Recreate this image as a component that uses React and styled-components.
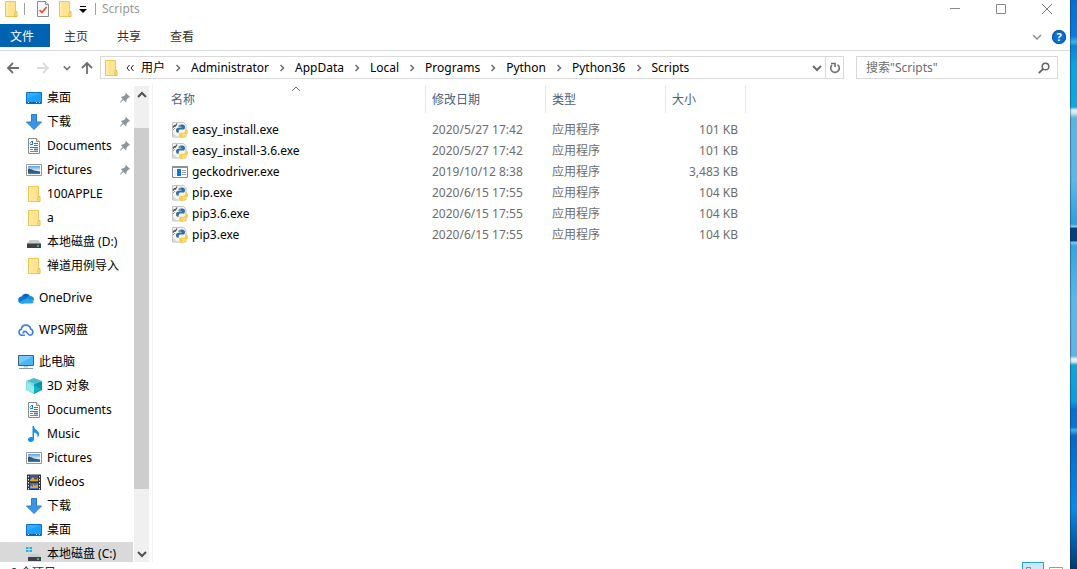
import React from 'react';
import styled, { createGlobalStyle } from 'styled-components';

const GlobalStyle = createGlobalStyle`
  * {
    box-sizing: border-box;
  }

  body {
    margin: 0;
    overflow: hidden;
    background: #fff;
    color: #000;
    font-family: 'Noto Sans', 'Noto Sans CJK SC', sans-serif;
    font-size: 12px;
    line-height: 20px;
  }

  button, input {
    margin: 0;
    padding: 0;
    border: 0;
    background: none;
    color: inherit;
    font: inherit;
  }

  svg {
    display: block;
    flex-shrink: 0;
  }
`;

const Screen = styled.div`
  display: flex;
  height: 100vh;
  overflow: hidden;
`;

const Desktop = styled.div`
  width: 7px;
  flex-shrink: 0;
  box-shadow: inset 1px 0 1px rgba(0, 40, 90, 0.4);
  background: linear-gradient(
    #0870cf 0, #0b7ad8 36px, #3cb4e4 42px, #0a84d8 46px, #0ca4dc 66px,
    #12a8dc 107px, #e4f3f8 110px, #cfeaf6 113px, #5cb4e0 118px,
    #5cb8e6 180px, #2f9edc 224px, #8fd4f0 227px, #04407c 228px,
    #04407c 241px, #7cd0f2 242px, #36a4de 246px, #5cb8e8 300px,
    #62b4e2 356px, #eef4f2 359px, #d6e8ec 362px, #0fa6d8 365px,
    #0c9cdc 402px, #0a6ecc 410px, #0a74d0 427px, #3cb0e8 430px,
    #0668c4 436px, #0a8ae6 508px, #0560ac 540px, #033a6c 569px
  );
`;

const Window = styled.div`
  display: flex;
  flex-direction: column;
  flex: 1;
  min-width: 0;
`;

const TitleBar = styled.header`
  display: flex;
  justify-content: space-between;
  height: 24px;
  flex-shrink: 0;
`;

const QuickAccess = styled.div`
  display: flex;
  height: 17px;
  align-items: center;
  padding-left: 3px;
`;

const QuickButton = styled.button`
  display: flex;
  width: ${(p) => p.$width || 16}px;
  height: 16px;
  align-items: center;
  justify-content: center;
`;

const Divider = styled.span`
  width: 1px;
  height: 12px;
  margin: 0 ${(p) => p.$gap}px;
  background: #a0a0a0;
`;

const WindowTitle = styled.span`
  padding-left: 3px;
  color: #999;
`;

const CaptionButtons = styled.div`
  display: flex;
`;

const CaptionButton = styled.button`
  display: flex;
  width: 46px;
  height: 17px;
  align-items: center;
  justify-content: center;
`;

const Ribbon = styled.nav`
  display: flex;
  height: 27px;
  flex-shrink: 0;
  align-items: flex-start;
  border-bottom: 1px solid #d9dadb;
`;

const RibbonTab = styled.button`
  width: 53px;
  height: 23px;
  padding: 2px 0 0 14px;
  color: #333;
  text-align: left;
`;

const FileTab = styled(RibbonTab)`
  width: 50px;
  padding-left: 10px;
  background: #0063b1;
  color: #fff;
`;

const RibbonTools = styled.div`
  display: flex;
  align-items: center;
  gap: 10px;
  margin-left: auto;
  padding: 6px 4px 0 0;
`;

const ToolButton = styled.button`
  display: flex;
  align-items: center;
  justify-content: center;
`;

const HelpButton = styled(ToolButton)`
  width: 14px;
  height: 14px;
  border-radius: 50%;
  background: #0b6fd0;
  box-shadow: inset 0 0 0 1px #0856a6;
  color: #fff;
  font-size: 11px;
  font-weight: 700;
  line-height: 14px;
`;

const AddressRow = styled.div`
  display: flex;
  height: 33px;
  flex-shrink: 0;
  padding: 5px 12px 5px 0;
`;

const History = styled.div`
  display: flex;
  width: 100px;
  align-items: center;
  gap: 8px;
  padding-left: 5px;
`;

const HistoryButton = styled(ToolButton)`
  width: ${(p) => p.$width}px;
  height: 23px;
`;

const AddressBox = styled.div`
  display: flex;
  flex: 1;
  min-width: 0;
  height: 23px;
  border: 1px solid #d9d9d9;
`;

const Crumbs = styled.div`
  display: flex;
  flex: 1;
  min-width: 0;
  align-items: center;
  overflow: hidden;
  padding-left: 2px;
  white-space: nowrap;
`;

const CrumbArrow = styled.span`
  display: flex;
  width: 26px;
  justify-content: center;
`;

const Overflow = styled.button`
  width: 22px;
  height: 20px;
  display: flex;
  align-items: center;
  justify-content: center;
`;

const DropButton = styled(ToolButton)`
  width: 17px;
  border-right: ${(p) => (p.$divided ? '1px solid #d9d9d9' : '0')};
`;

const SearchBox = styled.label`
  display: flex;
  width: 202px;
  height: 23px;
  align-items: center;
  margin-left: 12px;
  padding: 0 7px 0 9px;
  border: 1px solid #d9d9d9;
`;

const SearchInput = styled.input`
  flex: 1;
  min-width: 0;
  height: 20px;
  outline: 0;

  &::placeholder {
    color: #6d6d6d;
    opacity: 1;
  }
`;

const Body = styled.div`
  display: flex;
  flex: 1;
  min-height: 0;
`;

const Sidebar = styled.nav`
  width: 134px;
  flex-shrink: 0;
  overflow: hidden;
  padding-top: 2px;
`;

const TreeGroup = styled.div`
  margin-bottom: 8px;
`;

const TreeItem = styled.a`
  display: flex;
  height: 24px;
  align-items: center;
  gap: 5px;
  margin-right: 1px;
  padding: 0 3px 0 ${(p) => (p.$root ? 18 : 26)}px;
  background: ${(p) => (p.$selected ? '#d9d9d9' : 'transparent')};
  color: #000;
  text-decoration: none;
  white-space: nowrap;
`;

const PinSlot = styled.span`
  margin-left: auto;
`;

const ScrollBar = styled.div`
  display: flex;
  flex-direction: column;
  width: 16px;
  flex-shrink: 0;
  margin-top: 2px;
  border-right: 1px solid #fff;
  background: #f0f0f0;
`;

const ScrollButton = styled(ToolButton)`
  height: 17px;
`;

const ScrollTrack = styled.div`
  display: grid;
  flex: 1;
  grid-template-rows: 25fr 361fr 56fr;
`;

const ScrollThumb = styled.div`
  grid-row: 2;
  background: #cdcdcd;
`;

const Files = styled.main`
  flex: 1;
  min-width: 0;
  margin-left: 2px;
  padding: 2px 0 0 12px;
  border-left: 1px solid #f3f3f3;
`;

const FileTable = styled.table`
  width: 581px;
  border-collapse: separate;
  border-spacing: 0;
  table-layout: fixed;
`;

const HeadCell = styled.th`
  position: relative;
  width: ${(p) => p.$width}px;
  height: 27px;
  padding: 0 6px;
  border-right: 1px solid #e5e5e5;
  color: #4c607a;
  font-weight: 400;
  text-align: left;
`;

const SortMark = styled.span`
  position: absolute;
  top: -2px;
  left: 50%;
  margin-left: -4px;
`;

const Spacer = styled.tr`
  height: 6px;
`;

const Cell = styled.td`
  height: 21px;
  padding: 0 8px 0 6px;
  color: #6d6d6d;
  text-align: ${(p) => (p.$right ? 'right' : 'left')};
  white-space: nowrap;
`;

const FileName = styled.span`
  display: flex;
  align-items: center;
  gap: 4px;
  padding-left: 1px;
  color: #000;
`;

const StatusBar = styled.footer`
  display: flex;
  height: 7px;
  flex-shrink: 0;
  justify-content: space-between;
  overflow: hidden;
  padding-right: 7px;
  color: #1e395b;
`;

const StatusText = styled.span`
  padding: 1px 0 0 10px;
`;

const ViewButtons = styled.div`
  display: flex;
  gap: 5px;
`;

const ViewButton = styled.button`
  display: flex;
  width: ${(p) => (p.$active ? 22 : 14)}px;
  height: 20px;
  align-items: flex-start;
  padding: ${(p) => (p.$active ? '4px 3px' : '5px 0')};
  border: ${(p) => (p.$active ? '1px solid #26a0da' : '0')};
  background: ${(p) => (p.$active ? '#cbe8f6' : 'transparent')};
`;

const FolderIcon = () => (
  <svg width="16" height="16" viewBox="0 0 16 16">
    <path d="M2.500.5h10v10h1v5h-11z" fill="#ffe493" stroke="#efc64f" />
    <path d="M3 1h2v14H3z" fill="#ffeaa8" />
    <path d="M12.500 10.500h1.500v5h-2v-4z" fill="#ffe9a0" stroke="#e6b93c" />
  </svg>
);

const CheckPageIcon = () => (
  <svg width="14" height="16" viewBox="0 0 14 16">
    <path d="M1.500.5h8l3 3v12h-11z" fill="#f7f9fb" stroke="#8a8a8a" />
    <path d="M9.500.5v3h3" fill="#fff" stroke="#8a8a8a" />
    <path d="M3.500 9l2.500 2.500 4.500-5.500" fill="none" stroke="#e8501e" strokeWidth="1.700" />
  </svg>
);

const MonitorIcon = () => (
  <svg width="16" height="16" viewBox="0 0 16 16">
    <path d="M.5 2.500h15v11H.5z" fill="#1aa0ff" stroke="#0b74c8" />
    <path d="M1 9l13-6H1z" fill="#35aeff" />
    <path d="M1 12h14v1.500H1z" fill="#0563ae" />
    <path d="M2 12.500h1m7 0h1m2 0h1" stroke="#d8efff" />
  </svg>
);

const DownloadIcon = () => (
  <svg width="16" height="16" viewBox="0 0 16 16">
    <path d="M5.500.5h5v7.500h5L8 15.500.500 8h5z" fill="#3a96e4" stroke="#2b7fc9" />
  </svg>
);

const DocumentIcon = () => (
  <svg width="16" height="16" viewBox="0 0 16 16">
    <path d="M2.500.5h8l3 3v12h-11z" fill="#fff" stroke="#8b8b8b" />
    <path d="M10.500.5v3h3" fill="#eee" stroke="#8b8b8b" />
    <path d="M4 6.500h3M6.500 3v3.500M4 5.500l2-2.500M8 5.500h4M8 7.500h4M4 9.500h8" fill="none" stroke="#1689d2" />
    <path d="M4 11.500h3m-3 2h8m-3-2h3" stroke="#7b8790" />
    <path d="M8 10.500h4v2H8z" fill="#548199" />
  </svg>
);

const PictureIcon = () => (
  <svg width="16" height="16" viewBox="0 0 16 16">
    <defs>
      <linearGradient id="sky" x2="0" y2="1">
        <stop offset="0" stopColor="#569fe9" />
        <stop offset=".6" stopColor="#e6f3fb" />
        <stop offset="1" stopColor="#4d8db9" />
      </linearGradient>
    </defs>
    <path d="M.5 2.500h15v11H.5z" fill="#fff" stroke="#999" />
    <path d="M2 4h12v8H2z" fill="url(#sky)" />
    <path d="M2 7c3-1 4 1 6 1.500s4 .5 6 1V11H2z" fill="#315c62" />
    <path d="M2 10.500h12V12H2z" fill="#2d78b4" />
  </svg>
);

const DiskIcon = ({ windows }) => (
  <svg width="16" height="16" viewBox="0 0 16 16">
    <path d={windows ? 'M3.500 8h9L15 11H2z' : 'M3.500 6h9L15 10H1z'} fill="#c9cccf" />
    <path d={windows ? 'M2 11h13v4H2z' : 'M1 9.500h14V14H1z'} fill="#3c4145" />
    <path d={windows ? 'M11 13h2' : 'M11 12h2'} stroke="#42e35a" strokeWidth="1.500" />
    {windows && <path d="M0 1h2.500v2H0zm3.500 0H6v2H3.500zM0 4h2.500v2H0zm3.500 0H6v2H3.500z" fill="#16b3e8" />}
  </svg>
);

const OneDriveIcon = () => (
  <svg width="16" height="16" viewBox="0 0 16 16">
    <path d="M3.500 7.500A4.600 4.600 0 0 1 12 6L9 10z" fill="#0864b8" />
    <path d="M3.500 13.500A3.500 3.500 0 0 1 4 6.500c2-.5 3 .5 5 2l-3 5z" fill="#0a78d4" />
    <path d="M8 8.500A4 4 0 0 1 12 6a3.800 3.800 0 0 1 4 4.500L11 11z" fill="#158fdf" />
    <path d="M1.200 12L9 8.500l6.800 3a2.500 2.500 0 0 1-2.300 2H3.500a3 3 0 0 1-2.300-1.500z" fill="#27a5ea" />
  </svg>
);

const WpsCloudIcon = () => (
  <svg width="16" height="16" viewBox="0 0 16 16" fill="none" stroke="#3a7df0" strokeWidth="1.600">
    <path d="M7 13.200H3.800A3 3 0 0 1 3.300 7.300 4.700 4.700 0 0 1 12.600 7a3.200 3.200 0 0 1-.4 6.200c-2.800 0-2.800-3.800-5-3.800-1.500 0-2 1-2 2" />
  </svg>
);

const ComputerIcon = () => (
  <svg width="16" height="16" viewBox="0 0 16 16">
    <path d="M.5 1.500h15v10H.5z" fill="#49b6f6" stroke="#3c637b" />
    <path d="M1 2h14L1 10z" fill="#78cbfa" />
    <path d="M6 12h4v1.500H6z" fill="#b2c6d1" />
    <path d="M1 14.500h14" stroke="#8499a6" />
  </svg>
);

const CubeIcon = () => (
  <svg width="16" height="16" viewBox="0 0 16 16">
    <path d="M8 0l8 3-8 3-8-3z" fill="#48bfd0" />
    <path d="M0 3l8 3v10l-8-4z" fill="#78dae3" />
    <path d="M16 3L8 6v10l8-4z" fill="#0796ad" />
    <path d="M1 4l7 5v6l-7-3z" fill="#b4eff1" opacity=".6" />
    <path d="M8 7l7 4-7 4z" fill="#16b3c6" />
  </svg>
);

const MusicIcon = () => (
  <svg width="16" height="16" viewBox="0 0 16 16">
    <path d="M6.500 0h1.500c0 4 5 4 5 8 0 1.500-.5 2.500-1.500 3.500.5-3-1-4.500-3.500-5V13c0 2-1.500 3-3.500 3C2.800 16 2 15 2 13.800c0-2 2.300-3.200 4.500-2.500z" fill="#1491ea" />
  </svg>
);

const VideoIcon = () => (
  <svg width="16" height="16" viewBox="0 0 16 16">
    <path d="M1 .500h14V16H1z" fill="#343434" />
    <path d="M4 1h8v7H4z" fill="#3157a0" />
    <path d="M4 9h8v6H4z" fill="#3b70c8" />
    <path d="M4 6l3-3 2 3 3-2v3H4zm0 7l3-3 2 2 3-2v4H4z" fill="#d6a938" />
    <path d="M8 3h3v3M5 11h2v2" fill="#a64832" />
    <path d="M2.500 2v14M13.500 2v14" stroke="#eee" strokeDasharray="1.500 1.500" />
  </svg>
);

const PinIcon = () => (
  <svg width="10" height="10" viewBox="0 0 10 10">
    <path d="M6 0l4 4-1 .8-.7-.2L6.500 7v1.500l-1 .5L3.600 7 .5 9.700 0 9.300 2.700 6 1 4.200l.7-.8h1.500l2.500-2L5.300.700z" fill="#8796a1" />
  </svg>
);

const PythonIcon = () => (
  <svg width="16" height="16" viewBox="0 0 16 16">
    <path d="M.5.5h11l2.500 2.500v12H.5z" fill="#f4f4f4" stroke="#c4c4c4" />
    <path d="M1 5.500l1.500-2 1 .5 1.500-2.500" fill="none" stroke="#555" strokeWidth="1.300" />
    <path d="M1 8l2-2" stroke="#999" />
    <path d="M1 11l5 4.500H1z" fill="#d8d8d8" />
    <path d="M9.300 2.500c-2 0-2.800.8-2.800 2V5.500h3.300V6H5.700C4.500 6 4 7 4 8.300c0 1.500.6 2.500 1.700 2.500h1V9.300c0-1 .8-1.700 1.800-1.700h2.900c.8 0 1.500-.6 1.500-1.500V4.500c0-1.500-1.300-2-3.600-2z" fill="#336f9f" />
    <path d="M10.400 15.700c2.200 0 2.700-.8 2.700-2v-1h-3.300v-.5h4.500c1.200 0 1.700-1 1.700-2.300 0-1.500-.7-2.400-1.800-2.400H13.200V9c0 1-.7 1.700-1.700 1.700H8.700c-.9 0-1.600.6-1.600 1.500v1.600c0 1.300 1 1.900 3.300 1.900z" fill="#ffcf3b" />
    <path d="M7.500 4h1M11.300 14h1" stroke="#fff" />
  </svg>
);

const AppIcon = () => (
  <svg width="16" height="16" viewBox="0 0 16 16">
    <path d="M.5 2.500h15v11H.5z" fill="#fff" stroke="#7c858b" />
    <path d="M0 2h16v2H0z" fill="#8a9297" />
    <path d="M5 5h4v7H5z" fill="#0878d7" />
    <path d="M10 6.500h4m-4 2h4m-4 2h4" stroke="#9da3a7" />
    <path d="M2 5h2v7H2z" fill="#edf0f1" />
  </svg>
);

const chevrons = {
  down: 'M1 3l4 4 4-4',
  up: 'M1 7l4-4 4 4',
  right: 'M3.500 2l3 3-3 3',
};

const Chevron = ({ dir = 'down', size = 10, color = '#6d6d6d', weight = 1 }) => (
  <svg width={size} height={size} viewBox="0 0 10 10">
    <path d={chevrons[dir]} fill="none" stroke={color} strokeWidth={weight} />
  </svg>
);

const ArrowIcon = ({ d, color }) => (
  <svg width="14" height="14" viewBox="0 0 14 14">
    <path d={d} fill="none" stroke={color} strokeWidth="1.800" />
  </svg>
);

const RefreshIcon = () => (
  <svg width="12" height="12" viewBox="0 0 12 12" fill="none" stroke="#6d6d6d" strokeWidth="1.600">
    <path d="M8.500 2.600A4.300 4.300 0 1 1 3 3M2 1.500h4V5" />
  </svg>
);

const SearchIcon = () => (
  <svg width="12" height="12" viewBox="0 0 12 12" fill="none" stroke="#666">
    <circle cx="7.500" cy="4.500" r="3.300" strokeWidth="1.500" />
    <path d="M5 7L.8 11.200" strokeWidth="1.800" />
  </svg>
);

const path = ['用户', 'Administrator', 'AppData', 'Local', 'Programs', 'Python', 'Python36', 'Scripts'];

const tree = [
  [
    { name: '桌面', icon: MonitorIcon, pinned: true },
    { name: '下载', icon: DownloadIcon, pinned: true },
    { name: 'Documents', icon: DocumentIcon, pinned: true },
    { name: 'Pictures', icon: PictureIcon, pinned: true },
    { name: '100APPLE', icon: FolderIcon },
    { name: 'a', icon: FolderIcon },
    { name: '本地磁盘 (D:)', icon: DiskIcon },
    { name: '禅道用例导入', icon: FolderIcon },
  ],
  [{ name: 'OneDrive', icon: OneDriveIcon, root: true }],
  [{ name: 'WPS网盘', icon: WpsCloudIcon, root: true }],
  [
    { name: '此电脑', icon: ComputerIcon, root: true },
    { name: '3D 对象', icon: CubeIcon },
    { name: 'Documents', icon: DocumentIcon },
    { name: 'Music', icon: MusicIcon },
    { name: 'Pictures', icon: PictureIcon },
    { name: 'Videos', icon: VideoIcon },
    { name: '下载', icon: DownloadIcon },
    { name: '桌面', icon: MonitorIcon },
    { name: '本地磁盘 (C:)', icon: () => <DiskIcon windows />, selected: true },
  ],
];

const columns = [
  { label: '名称', width: 261, sorted: true },
  { label: '修改日期', width: 120 },
  { label: '类型', width: 120 },
  { label: '大小', width: 80 },
];

const files = [
  { name: 'easy_install.exe', date: '2020/5/27 17:42', size: '101 KB' },
  { name: 'easy_install-3.6.exe', date: '2020/5/27 17:42', size: '101 KB' },
  { name: 'geckodriver.exe', date: '2019/10/12 8:38', size: '3,483 KB', icon: AppIcon },
  { name: 'pip.exe', date: '2020/6/15 17:55', size: '104 KB' },
  { name: 'pip3.6.exe', date: '2020/6/15 17:55', size: '104 KB' },
  { name: 'pip3.exe', date: '2020/6/15 17:55', size: '104 KB' },
];

const Caption = () => (
  <TitleBar>
    <QuickAccess>
      <QuickButton aria-label="Scripts"><FolderIcon /></QuickButton>
      <Divider $gap={5} />
      <QuickButton $width={26} aria-label="属性"><CheckPageIcon /></QuickButton>
      <QuickButton $width={18} aria-label="新建文件夹"><FolderIcon /></QuickButton>
      <QuickButton $width={18} aria-label="自定义快速访问工具栏">
        <svg width="8" height="8" viewBox="0 0 8 8">
          <path d="M1 1.500h6" stroke="#000" />
          <path d="M0 4h8L4 8z" fill="#000" />
        </svg>
      </QuickButton>
      <Divider $gap={3} />
      <WindowTitle>Scripts</WindowTitle>
    </QuickAccess>
    <CaptionButtons>
      <CaptionButton aria-label="最小化">
        <svg width="10" height="10" viewBox="0 0 10 10"><path d="M0 4.500h10" stroke="#888" /></svg>
      </CaptionButton>
      <CaptionButton aria-label="最大化">
        <svg width="10" height="10" viewBox="0 0 10 10"><path d="M.5.5h9v9h-9z" fill="none" stroke="#888" /></svg>
      </CaptionButton>
      <CaptionButton aria-label="关闭">
        <svg width="10" height="10" viewBox="0 0 10 10"><path d="M0 0l10 10M10 0L0 10" stroke="#777" /></svg>
      </CaptionButton>
    </CaptionButtons>
  </TitleBar>
);

const AddressBar = () => (
  <AddressRow>
    <History>
      <HistoryButton $width={16} aria-label="后退">
        <ArrowIcon d="M13 7H2M7 2L2 7l5 5" color="#6d6d6d" />
      </HistoryButton>
      <HistoryButton $width={28} aria-label="前进">
        <ArrowIcon d="M1 7h11M7 2l5 5-5 5" color="#dcdcdc" />
      </HistoryButton>
      <HistoryButton $width={4} aria-label="最近浏览的位置">
        <Chevron size={8} color="#777" weight={2} />
      </HistoryButton>
      <HistoryButton $width={20} aria-label="上移">
        <ArrowIcon d="M7 13V2M2 7l5-5 5 5" color="#6d6d6d" />
      </HistoryButton>
    </History>
    <AddressBox>
      <Crumbs>
        <FolderIcon />
        <Overflow aria-label="更多">
          <svg width="8" height="8" viewBox="0 0 8 8">
            <path d="M3.500 1L1 4l2.500 3M7.500 1L5 4l2.500 3" fill="none" stroke="#222" />
          </svg>
        </Overflow>
        {path.map((part, index) => (
          <React.Fragment key={part}>
            {index > 0 && <CrumbArrow><Chevron dir="right" weight={1.5} /></CrumbArrow>}
            <button>{part}</button>
          </React.Fragment>
        ))}
      </Crumbs>
      <DropButton $divided aria-label="以前的位置"><Chevron weight={2} /></DropButton>
      <DropButton aria-label="刷新"><RefreshIcon /></DropButton>
    </AddressBox>
    <SearchBox>
      <SearchInput type="text" aria-label="搜索" placeholder={'搜索"Scripts"'} />
      <SearchIcon />
    </SearchBox>
  </AddressRow>
);

const NavigationTree = () => (
  <Sidebar>
    {tree.map((group, index) => (
      <TreeGroup key={index}>
        {group.map(({ name, icon: Icon, root, pinned, selected }) => (
          <TreeItem key={name} href="#" $root={root} $selected={selected}>
            <Icon />
            {name}
            {pinned && <PinSlot><PinIcon /></PinSlot>}
          </TreeItem>
        ))}
      </TreeGroup>
    ))}
  </Sidebar>
);

const FileList = () => (
  <Files>
    <FileTable>
      <thead>
        <tr>
          {columns.map(({ label, width, sorted }) => (
            <HeadCell key={label} $width={width}>
              {sorted && <SortMark><Chevron dir="up" /></SortMark>}
              {label}
            </HeadCell>
          ))}
        </tr>
      </thead>
      <tbody>
        <Spacer />
        {files.map(({ name, date, size, icon: Icon = PythonIcon }) => (
          <tr key={name}>
            <Cell><FileName><Icon />{name}</FileName></Cell>
            <Cell>{date}</Cell>
            <Cell>应用程序</Cell>
            <Cell $right>{size}</Cell>
          </tr>
        ))}
      </tbody>
    </FileTable>
  </Files>
);

const App = () => {
  return (
    <Screen>
      <GlobalStyle />
      <Window>
        <Caption />
        <Ribbon>
          <FileTab>文件</FileTab>
          <RibbonTab>主页</RibbonTab>
          <RibbonTab>共享</RibbonTab>
          <RibbonTab>查看</RibbonTab>
          <RibbonTools>
            <ToolButton aria-label="展开功能区"><Chevron color="#888" weight={1.3} /></ToolButton>
            <HelpButton aria-label="帮助">?</HelpButton>
          </RibbonTools>
        </Ribbon>
        <AddressBar />
        <Body>
          <NavigationTree />
          <ScrollBar>
            <ScrollButton aria-label="向上滚动"><Chevron dir="up" weight={2} color="#505050" /></ScrollButton>
            <ScrollTrack><ScrollThumb /></ScrollTrack>
            <ScrollButton aria-label="向下滚动"><Chevron weight={2} color="#505050" /></ScrollButton>
          </ScrollBar>
          <FileList />
        </Body>
        <StatusBar>
          <StatusText>6 个项目</StatusText>
          <ViewButtons>
            <ViewButton $active aria-label="详细信息">
              <svg width="14" height="12" viewBox="0 0 14 12"><path d="M.5 12V.5h4V12" fill="none" stroke="#888" /></svg>
            </ViewButton>
            <ViewButton aria-label="大图标">
              <svg width="14" height="12" viewBox="0 0 14 12"><path d="M.5.5h13v11H.5z" fill="none" stroke="#999" /></svg>
            </ViewButton>
          </ViewButtons>
        </StatusBar>
      </Window>
      <Desktop />
    </Screen>
  );
};

export default App;
